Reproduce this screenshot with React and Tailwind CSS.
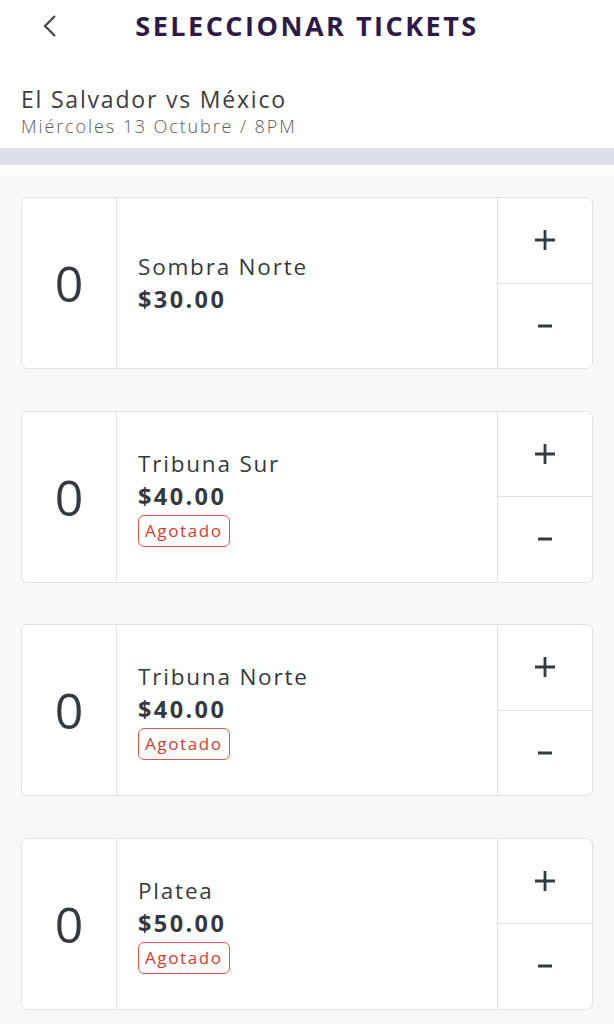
import React from "react";

const tickets = [
  { name: "Sombra Norte", price: "$30.00", soldOut: false },
  { name: "Tribuna Sur", price: "$40.00", soldOut: true },
  { name: "Tribuna Norte", price: "$40.00", soldOut: true },
  { name: "Platea", price: "$50.00", soldOut: true },
];

function Card({ t }) {
  return (
    <div className="flex h-[172px] rounded-md border border-[#e2e4e8] bg-white overflow-hidden">
      <div className="w-[95px] shrink-0 flex items-center justify-center text-[50px] leading-none text-[#343a40] border-r border-[#dfe1e5]">
        0
      </div>
      <div className="flex-1 flex flex-col justify-center pl-[21px]">
        <div className="text-[22.5px] leading-[33px] font-medium tracking-[1.8px] text-[#343a40]">{t.name}</div>
        <div className="text-[23.5px] leading-[33px] font-bold tracking-[2.4px] text-[#343a40]">{t.price}</div>
        {t.soldOut && (
          <div className="mt-[2px] self-start rounded-md border border-[#e0574f] px-[6px] h-[32px] flex items-center text-[17px] font-medium tracking-[1.6px] text-[#d93a31]">
            Agotado
          </div>
        )}
      </div>
      <div className="w-[95px] shrink-0 flex flex-col border-l border-[#dfe1e5]">
        <div className="flex-1 flex items-center justify-center border-b border-[#dfe1e5]">
          <svg width="22" height="22" viewBox="0 0 22 22"><path d="M11 1v20M1 11h20" stroke="#343a40" strokeWidth="2.8" /></svg>
        </div>
        <div className="flex-1 flex items-center justify-center">
          <svg width="14" height="4" viewBox="0 0 14 4"><path d="M0 2h14" stroke="#343a40" strokeWidth="3" /></svg>
        </div>
      </div>
    </div>
  );
}

export default function App() {
  return (
    <div className="w-[614px] min-h-[1024px] bg-[#f7f8fa]" style={{ fontFamily: "'Open Sans', 'Noto Sans', sans-serif" }}>
      <div className="bg-white">
        <div className="relative h-[52px] flex items-center justify-center">
          <svg className="absolute left-[42px] top-[14px]" width="16" height="24" viewBox="0 0 16 24">
            <path d="M13 2L3 12l10 10" fill="none" stroke="#444" strokeWidth="2.2" />
          </svg>
          <div className="text-[27px] font-bold tracking-[2.5px] text-[#2c1a4b]">SELECCIONAR TICKETS</div>
        </div>
        <div className="pl-[21px] pt-[33px] pb-[9px]">
          <div className="text-[23px] leading-[28px] font-medium tracking-[1.8px] text-[#3a3d42]">El Salvador vs México</div>
          <div className="text-[18px] leading-[26px] font-light tracking-[1.9px] text-[#5a5d62]">Miércoles 13 Octubre / 8PM</div>
        </div>
        <div className="h-[17px] bg-[#dde0e6]" />
        <div className="h-[10px] bg-white" />
      </div>
      <div className="px-[21px] pt-[22px] flex flex-col gap-[41.5px]">
        {tickets.map((t) => (
          <Card key={t.name} t={t} />
        ))}
      </div>
    </div>
  );
}
